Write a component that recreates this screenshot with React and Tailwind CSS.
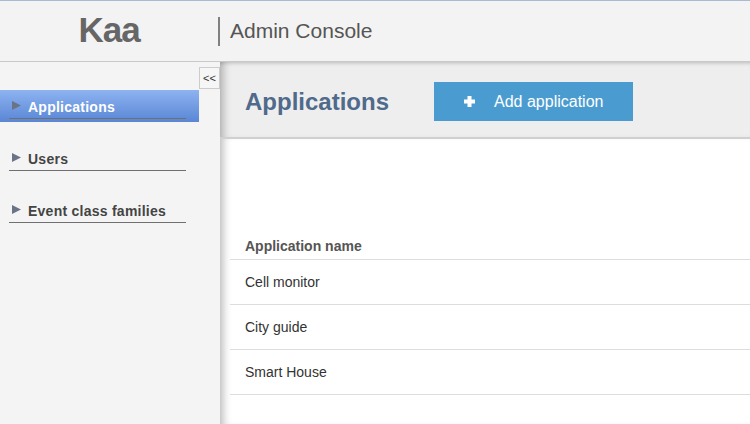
const navItems = [
  { label: "Applications", active: true },
  { label: "Users" },
  { label: "Event class families" },
];

const apps = ["Cell monitor", "City guide", "Smart House"];

function Triangle() {
  return (
    <svg width="9" height="9" viewBox="0 0 9 9" className="shrink-0">
      <polygon points="0,0 9,4.5 0,9" fill="#6b7487" />
    </svg>
  );
}

function PlusIcon() {
  return (
    <svg width="11" height="11" viewBox="0 0 11 11" className="shrink-0">
      <rect x="3.5" y="0" width="4" height="11" fill="#fff" />
      <rect x="0" y="3.5" width="11" height="4" fill="#fff" />
    </svg>
  );
}

export default function App() {
  return (
    <div
      className="w-[750px] h-[424px] flex flex-col overflow-hidden bg-white"
      style={{ fontFamily: "'Liberation Sans', Arial, sans-serif" }}
    >
      {/* HEADER */}
      <div className="h-[62px] shrink-0 flex items-center bg-[#f3f3f3] border-t border-t-[#a7bbd6] border-b border-b-[#c9c9c9]">
        <div className="w-[218px] flex justify-center -mt-[3px]">
          <span className="text-[35px] leading-none font-bold text-[#666] tracking-[-1px]">
            Kaa
          </span>
        </div>
        <div className="w-[2px] h-[29px] bg-[#808080]" />
        <span className="ml-[10px] text-[21px] text-[#555]">Admin Console</span>
      </div>

      <div className="flex flex-1 min-h-0">
        {/* SIDEBAR */}
        <div className="w-[220px] shrink-0 bg-[#f4f4f4] flex flex-col pt-[5px]">
          <button className="self-end w-[21px] h-[22px] border border-[#cccccc] bg-[#f6f6f6] text-[11px] leading-none text-[#333] flex items-center justify-center">
            &lt;&lt;
          </button>
          <div className="flex flex-col mt-[1px]">
            {navItems.map((item) => (
              <div
                key={item.label}
                className={
                  "w-[199px] h-[32px] mb-[20px] pt-[9px] " +
                  (item.active ? "bg-linear-to-b from-[#8db3f1] to-[#5a86d4]" : "")
                }
              >
                <div className="ml-[9px] w-[177px] border-b border-[#707070] pb-[3px] flex items-center">
                  <div className="w-[19px] pl-[3px] -mt-[3px]">
                    <Triangle />
                  </div>
                  <span
                    className={
                      "text-[14px] leading-[16px] font-bold tracking-[0.25px] " +
                      (item.active ? "text-white" : "text-[#444]")
                    }
                  >
                    {item.label}
                  </span>
                </div>
              </div>
            ))}
          </div>
        </div>

        {/* MAIN */}
        <div className="flex-1 flex flex-col min-w-0">
          <div className="h-[77px] shrink-0 bg-[#eeeeee] border-b-2 border-[#d0d0d0] flex items-start pl-[25px] pt-[20px] shadow-[inset_9px_0_8px_-6px_rgba(0,0,0,0.28),inset_0_4px_4px_-3px_rgba(0,0,0,0.2)]">
            <h1 className="h-[39px] flex items-center text-[24px] font-bold text-[#4f6a8a]">
              Applications
            </h1>
            <button className="ml-[45px] w-[199px] h-[39px] bg-[#4a9cd0] flex items-center pl-[30px] text-white">
              <PlusIcon />
              <span className="ml-[19px] text-[16px]">Add application</span>
            </button>
          </div>

          <div className="flex-1 pt-[91px] pl-[10px] shadow-[inset_9px_0_8px_-6px_rgba(0,0,0,0.28)]">
            <div className="h-[30px] border-b border-[#dddddd] flex items-end pb-[5px] pl-[15px] text-[14px] leading-[16px] font-bold text-[#555]">
              Application name
            </div>
            {apps.map((name) => (
              <div
                key={name}
                className="h-[45px] border-b border-[#dddddd] flex items-center pl-[15px] text-[14px] text-[#333]"
              >
                {name}
              </div>
            ))}
          </div>
        </div>
      </div>
    </div>
  );
}
